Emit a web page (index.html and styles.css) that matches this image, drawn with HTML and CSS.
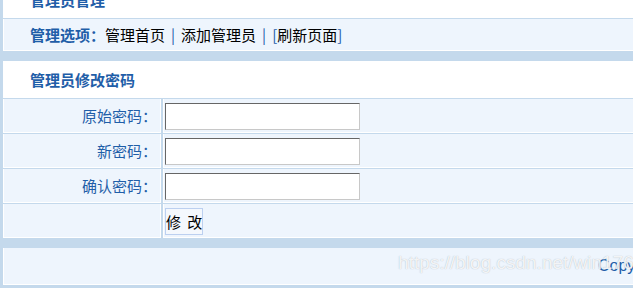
FILE: index.html
```html
<!DOCTYPE html>
<html>
<head>
    <meta charset="utf-8">
    <link rel="stylesheet" href="styles.css">
</head>
<body>
<div class="page">
    <table class="box">
        <tr><th class="head">管理员管理</th></tr>
        <tr>
            <td class="menu">
                <b>管理选项：</b><a href="#">管理首页</a><span class="sep">|</span><a href="#">添加管理员</a><span class="sep">|</span><span class="brk">[</span><a href="#">刷新页面</a><span class="brk">]</span>
            </td>
        </tr>
    </table>

    <form>
    <table class="box">
        <tr><th class="head" colspan="2">管理员修改密码</th></tr>
        <tr>
            <td class="label">原始密码：</td>
            <td class="field"><input type="password" class="text"></td>
        </tr>
        <tr>
            <td class="label">新密码：</td>
            <td class="field"><input type="password" class="text"></td>
        </tr>
        <tr>
            <td class="label">确认密码：</td>
            <td class="field"><input type="password" class="text"></td>
        </tr>
        <tr>
            <td class="label"></td>
            <td class="field"><button type="submit" class="btn">修 改</button></td>
        </tr>
    </table>
    </form>

    <table class="box">
        <tr><td class="footer">Copyright &copy; 2019 管理系统</td></tr>
    </table>
</div>
<div class="mark">https://blog.csdn.net/win176485</div>
</body>
</html>
```

FILE: styles.css
```css
body {
    margin: 0;
    background: #c4d9ec;
    font-family: "Noto Sans CJK SC", "Liberation Sans", sans-serif;
    font-size: 15px;
    overflow: hidden;
}

.page {
    width: 1100px;
    margin-top: -20px;
    margin-left: 1px;
}

form {
    margin: 0;
}

.box {
    width: 100%;
    border-collapse: separate;
    border-spacing: 2px 1px;
    margin-bottom: 8px;
}

.box td {
    background: #eef5fd;
    border: 1px solid #fff;
    border-top: 0;
}

.head {
    background: #fff;
    height: 37px;
    padding: 0 0 0 27px;
    text-align: left;
    font-size: 15px;
    font-weight: bold;
    color: #1f5ea8;
}

.menu {
    height: 31px;
    padding: 0 0 0 26px;
    color: #1f5ea8;
}

.menu a {
    color: #000;
    text-decoration: none;
}

.sep {
    margin: 0 6px;
    color: #1f5ea8;
}

.brk {
    color: #1f5ea8;
}

.label {
    width: 153px;
    height: 33px;
    padding: 0 3px 0 0;
    text-align: right;
    color: #1f5ea8;
}

.field {
    padding: 2px 0 0 1px;
}

.text {
    width: 193px;
    height: 25px;
    margin: 0;
    padding: 0;
    border: 1px solid #c8c8c8;
    border-top-color: #666;
    border-left-color: #666;
    background: #fff;
}

.btn {
    height: 27px;
    padding: 0;
    border: 1px solid #bcd0f0;
    background: #f4f8fd;
    font-family: "Noto Sans CJK SC", sans-serif;
    font-size: 15px;
    word-spacing: 3px;
    color: #000;
}

.footer {
    height: 32px;
    padding: 0 0 4px 594px;
    color: #1f5ea8;
    font-size: 16px;
    font-family: "Liberation Sans", "Noto Sans CJK SC", sans-serif;
}

.mark {
    position: absolute;
    left: 398px;
    top: 252px;
    font-family: "Liberation Sans", sans-serif;
    font-size: 19px;
    color: rgba(255, 255, 255, 0.85);
    text-shadow: 0 0 1px rgba(140, 150, 160, 0.7);
}
```
